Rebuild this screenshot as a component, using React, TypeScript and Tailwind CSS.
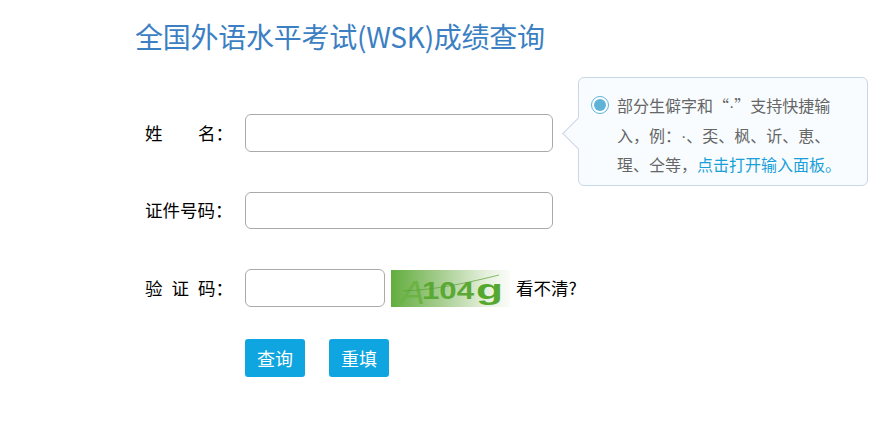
import React from 'react';

const font = { fontFamily: '"Noto Sans CJK SC", "Liberation Sans", sans-serif' };

const Captcha: React.FC = () => (
  <svg width="119" height="37" viewBox="0 0 119 37" className="block shrink-0">
    <defs>
      <linearGradient id="cap" x1="0" x2="1" y1="0" y2="0">
        <stop offset="0" stopColor="#62ad3e" />
        <stop offset="0.4" stopColor="#a3cc8c" />
        <stop offset="0.8" stopColor="#e6f0dd" />
        <stop offset="1" stopColor="#fbfcf8" />
      </linearGradient>
    </defs>
    <rect width="119" height="37" fill="url(#cap)" />
    <text x="9" y="34" fontFamily="Liberation Sans" fontSize="33" fontStyle="italic" fill="#6cb345" textLength="25" lengthAdjust="spacingAndGlyphs">A</text>
    <text x="31" y="29" fontFamily="Liberation Sans" fontSize="23" fontWeight="700" fill="#5aa935" textLength="52" lengthAdjust="spacingAndGlyphs">104</text>
    <text x="85" y="29" fontFamily="Liberation Sans" fontSize="28" fontWeight="700" fill="#55a82e" textLength="27" lengthAdjust="spacingAndGlyphs">g</text>
    <path d="M12 21 C45 20 80 12 108 5" stroke="#55a030" strokeWidth="0.7" fill="none" />
  </svg>
);

const Field: React.FC<{ label: string[]; children: React.ReactNode }> = ({ label, children }) => (
  <div className="flex items-center">
    <label className="mr-[12px] -mt-[1px] flex w-[88px] justify-between text-[17.5px] text-black leading-none">
      {label.map((part) => (
        <span key={part}>{part}</span>
      ))}
    </label>
    {children}
  </div>
);

const Dot = () => <span className="font-['Liberation_Sans'] leading-none">·</span>;

export default function App() {
  return (
    <div className="relative w-[876px] h-[443px] overflow-hidden bg-white pl-[145px]" style={font}>
      <h1 className="-ml-[10px] pt-[17px] text-[28px] leading-[38px] font-normal tracking-[-0.25px] text-[#3c7fc2]">
        全国外语水平考试(WSK)成绩查询
      </h1>

      <form className="mt-[59px] flex flex-col gap-[40px]">
        <Field label={['姓', '名：']}>
          <input className="w-[308px] h-[38px] rounded-[6px] border border-[#aaaaaa] bg-white" />
        </Field>
        <Field label={['证件号码：']}>
          <input className="w-[308px] h-[37px] rounded-[6px] border border-[#aaaaaa] bg-white" />
        </Field>
        <Field label={['验', '证', '码：']}>
          <input className="w-[140px] h-[38px] rounded-[6px] border border-[#aaaaaa] bg-white" />
          <div className="ml-[6px]">
            <Captcha />
          </div>
          <span className="ml-[6px] text-[17.5px] text-black">看不清?</span>
        </Field>
        <div className="-mt-[8px] ml-[100px] flex gap-[24px]">
          <button type="button" className="w-[60px] h-[38px] rounded-[3px] bg-[#0ea5e0] text-[18px] text-white">查询</button>
          <button type="button" className="w-[60px] h-[38px] rounded-[3px] bg-[#0ea5e0] text-[18px] text-white">重填</button>
        </div>
      </form>

      {/* input tip, hangs over the page next to the name field */}
      <div className="absolute left-[578px] top-[77px] w-[290px] h-[109px] rounded-[6px] border border-[#c9d8e6] bg-[#f8fcfe] pl-[38px] pr-[25px] pt-[13px] text-[16px] leading-[29.5px] text-[#666666] [text-spacing-trim:space-all]">
        <span className="absolute left-[-12.5px] top-[43.5px] w-[23px] h-[23px] rotate-45 border-b border-l border-[#c9d8e6] bg-[#f8fcfe]" />
        <span className="absolute left-[12px] top-[18px] flex w-[18px] h-[18px] items-center justify-center rounded-full border border-[#5fb3d6] bg-white">
          <span className="w-[12px] h-[12px] rounded-full bg-[#5fb3d6]" />
        </span>
        部分生僻字和“<Dot />”支持快捷输入，例：<Dot />、奀、枫、䜣、恵、瑆、仝等，<span className="text-[#1a9fd9]">点击打开输入面板。</span>
      </div>
    </div>
  );
}
